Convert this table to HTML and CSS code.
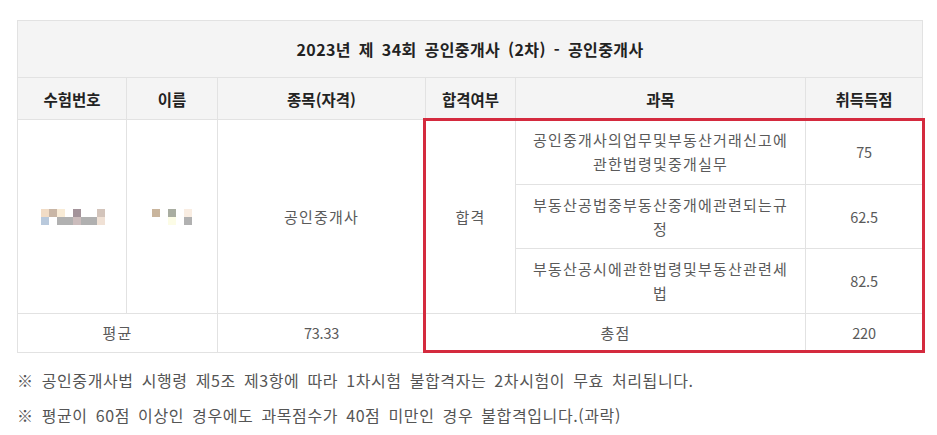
FILE: index.html
```html
<!DOCTYPE html>
<html lang="ko">
<head>
<meta charset="utf-8">
<title>공인중개사 성적</title>
<link rel="stylesheet" href="styles.css">
</head>
<body>
<div class="page">
  <div class="table-wrap">
    <table class="result">
      <colgroup>
        <col class="c1"><col class="c2"><col class="c3"><col class="c4"><col class="c5"><col class="c6">
      </colgroup>
      <thead>
        <tr class="title-row"><th colspan="6">2023년 제 34회 공인중개사 (2차) - 공인중개사</th></tr>
        <tr class="head-row">
          <th>수험번호</th><th>이름</th><th>종목(자격)</th><th>합격여부</th><th>과목</th><th>취득득점</th>
        </tr>
      </thead>
      <tbody>
        <tr class="r1">
          <td rowspan="3" class="mosaic-cell mosaic-id">
            <svg class="mosaic" width="64" height="16" viewBox="0 0 64 16">
              <rect x="0" y="0" width="8" height="8" fill="#f1dcc6"/>
              <rect x="8" y="0" width="8" height="8" fill="#c9b6a6"/>
              <rect x="16" y="0" width="8" height="8" fill="#f8ebd6"/>
              <rect x="32" y="0" width="8" height="8" fill="#a3939a"/>
              <rect x="56" y="0" width="8" height="8" fill="#d3c4bb"/>
              <rect x="0" y="8" width="8" height="8" fill="#b9c9dc"/>
              <rect x="16" y="8" width="16" height="8" fill="#b1b1b1"/>
              <rect x="32" y="8" width="8" height="8" fill="#cbbcbc"/>
              <rect x="40" y="8" width="16" height="8" fill="#b0b0b0"/>
              <rect x="56" y="8" width="8" height="8" fill="#f0e1d5"/>
            </svg>
          </td>
          <td rowspan="3" class="mosaic-cell">
            <svg class="mosaic" width="40" height="16" viewBox="0 0 40 16">
              <rect x="0" y="0" width="8" height="8" fill="#c9b59d"/>
              <rect x="16" y="0" width="8" height="8" fill="#a9ada1"/>
              <rect x="32" y="0" width="8" height="8" fill="#f9ede2"/>
              <rect x="16" y="8" width="8" height="8" fill="#fcfce6"/>
              <rect x="32" y="8" width="8" height="8" fill="#b1b1b1"/>
            </svg>
          </td>
          <td rowspan="3">공인중개사</td>
          <td rowspan="3">합격</td>
          <td class="subject">공인중개사의업무및부동산거래신고에관한법령및중개실무</td>
          <td class="num">75</td>
        </tr>
        <tr class="r2">
          <td class="subject">부동산공법중부동산중개에관련되는규정</td>
          <td class="num">62.5</td>
        </tr>
        <tr class="r3">
          <td class="subject">부동산공시에관한법령및부동산관련세법</td>
          <td class="num">82.5</td>
        </tr>
        <tr class="avg-row">
          <td colspan="2">평균</td>
          <td class="num">73.33</td>
          <td colspan="2">총점</td>
          <td class="num">220</td>
        </tr>
      </tbody>
    </table>
    <div class="highlight"></div>
  </div>
  <p class="note">※ 공인중개사법 시행령 제5조 제3항에 따라 1차시험 불합격자는 2차시험이 무효 처리됩니다.</p>
  <p class="note">※ 평균이 60점 이상인 경우에도 과목점수가 40점 미만인 경우 불합격입니다.(과락)</p>
</div>
</body>
</html>
```
FILE: styles.css
```css
html, body {
  margin: 0;
  padding: 0;
  background: #ffffff;
}
body {
  font-family: "Noto Sans CJK KR", "Noto Sans", sans-serif;
  color: #555555;
}
.page {
  padding: 20px 15px 0 17px;
}
.table-wrap {
  position: relative;
  width: 905px;
}
.result {
  width: 905px;
  border-collapse: collapse;
  table-layout: fixed;
  font-size: 15px;
}
.c1 { width: 109px; }
.c2 { width: 91px; }
.c3 { width: 208px; }
.c4 { width: 90px; }
.c5 { width: 290px; }
.c6 { width: 117px; }
.result th,
.result td {
  border: 1px solid #e2e2e2;
  text-align: center;
  vertical-align: middle;
  padding: 0 12px;
  word-break: break-all;
}
.result th {
  background: #f4f4f4;
  color: #222222;
  font-weight: 700;
}
.title-row th {
  height: 56px;
  font-size: 16px;
  letter-spacing: 0.4px;
  word-spacing: 3px;
}
.head-row th {
  height: 41px;
  font-size: 15.5px;
}
.result td {
  color: #5a5a5a;
  line-height: 24px;
  letter-spacing: 1.2px;
}
.result td.num {
  font-size: 14.5px;
  letter-spacing: -0.2px;
}
.r1 td, .r3 td { height: 64px; }
.r2 td { height: 63px; }
.avg-row td { height: 38px; }
.result .mosaic-cell { padding: 0; }
.mosaic { display: block; margin: 0 auto; }
.mosaic-id .mosaic { margin: 0 0 0 23px; }
.highlight {
  position: absolute;
  left: 406px;
  top: 98px;
  width: 496px;
  height: 229px;
  border: 3px solid #d42a3e;
  pointer-events: none;
}
.note {
  margin: 0;
  font-size: 16px;
  line-height: 35px;
  letter-spacing: 0.6px;
  word-spacing: 3px;
  color: #555555;
}
.note:first-of-type { margin-top: 10px; }
```
